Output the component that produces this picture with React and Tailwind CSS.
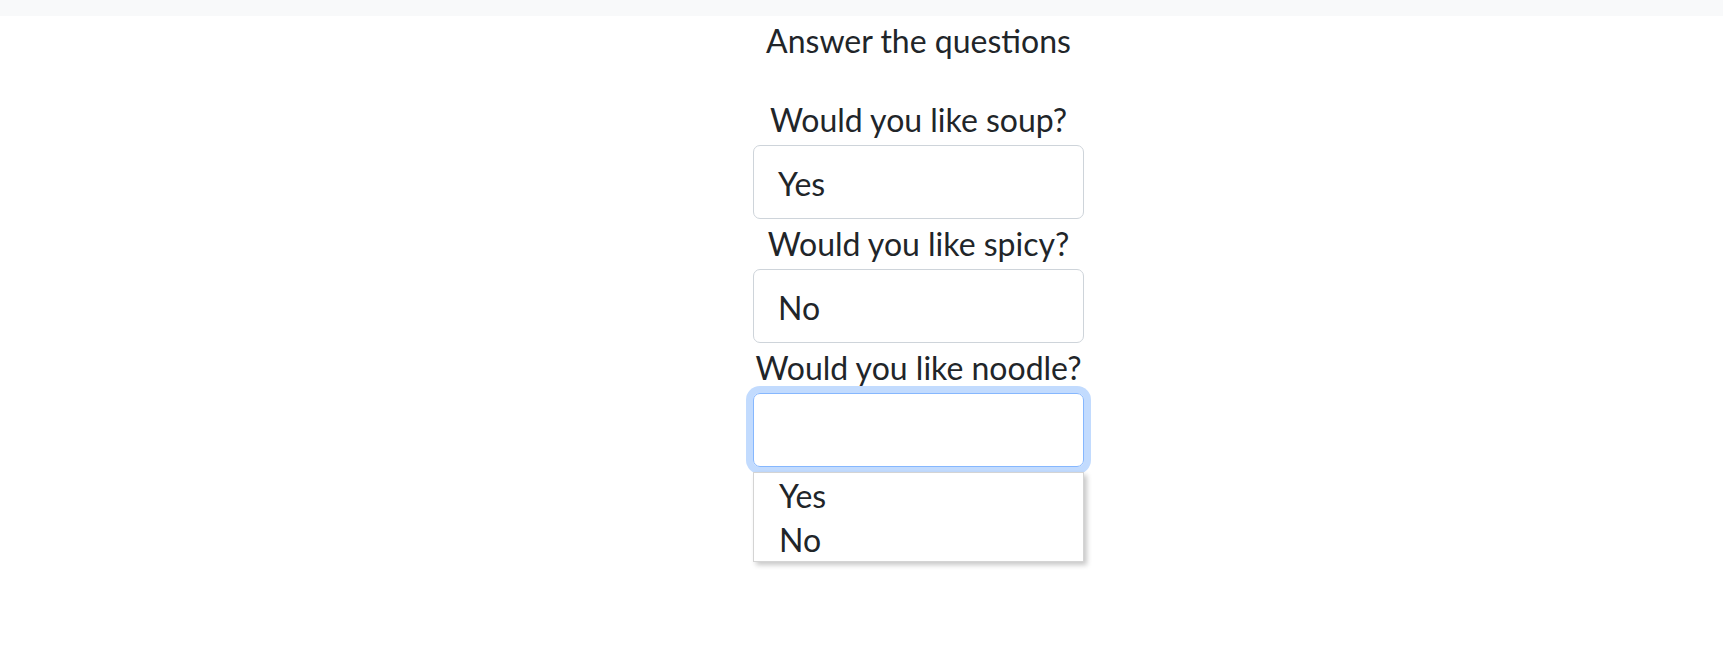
import { useState } from "react";

const questions = [
  { id: "soup", label: "Would you like soup?", value: "Yes" },
  { id: "spicy", label: "Would you like spicy?", value: "No" },
  { id: "noodle", label: "Would you like noodle?", value: "" },
];

export default function App() {
  const [answers] = useState(questions);

  return (
    <div
      className="min-h-screen bg-white text-[#212529]"
      style={{ fontFamily: "Lato, 'Noto Sans', sans-serif" }}
    >
      <div className="h-4 bg-[#f8f9fa]" />

      <div className="ml-[753px] w-[331px] text-center text-[32px]">
        <p className="pt-[2px] leading-[46px]">Answer the questions</p>

        <div className="mt-[31px]">
          {answers.map((q) => {
            const open = q.id === "noodle";
            return (
              <div key={q.id} className="relative">
                <label className="block whitespace-nowrap pt-[2px] leading-[46px]">
                  {q.label}
                </label>
                <div
                  className={`mt-[2px] h-[74px] rounded-[7px] border px-6 pt-[14px] pb-[10px] text-left leading-[48px] ${
                    open
                      ? "border-[#86b7fe] shadow-[0_0_0_7px_#c2dbfe]"
                      : "border-[#ced4da]"
                  }`}
                >
                  {q.value}
                </div>

                {open && (
                  <div className="absolute left-0 top-[129px] z-10 w-[331px] border border-[#d4d4d4] bg-white text-left shadow-[3px_3px_5px_rgba(0,0,0,0.22)]">
                    <div className="pl-[25px] pt-[2px] leading-[42px]">Yes</div>
                    <div className="pl-[25px] pt-[2px] leading-[42px]">No</div>
                  </div>
                )}
              </div>
            );
          })}
        </div>
      </div>
    </div>
  );
}
